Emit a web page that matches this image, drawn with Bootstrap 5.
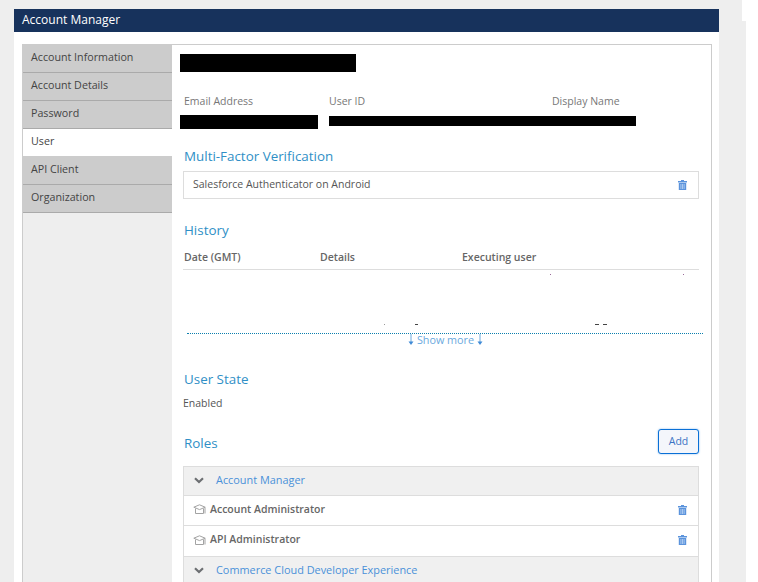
<!DOCTYPE html>
<html lang="en">
<head>
<meta charset="utf-8">
<title>Account Manager</title>
<link href="https://cdn.jsdelivr.net/npm/bootstrap@5.3.0/dist/css/bootstrap.min.css" rel="stylesheet">
<style>
html,body{height:582px;overflow:hidden}
body{font-family:"Open Sans","Liberation Sans",sans-serif;font-size:10.5px;color:#54585c;
background:linear-gradient(#fff,#fff) 742px 0/16px 21px no-repeat,linear-gradient(#eee,#eee) 0 0/746px 100% no-repeat,#fff}
.shell{width:705px;margin:9px 0 0 14px}
.topbar{height:23px;background:#17325c;color:#fff;font-size:12px;line-height:22px;padding-left:8px}
.sheet{background:#fff;padding:12px 7px 0 8px;height:600px}
.frame{border:1px solid #ccc;height:600px}
.sidetabs{width:149px;background:#eee;flex:none}
.sidetab{height:28px;line-height:25px;padding-left:8px;background:#ccc;border-bottom:1px solid #aaa;color:#444;font-size:10.7px}
.sidetab.on{background:#fff;border-bottom-color:#ccc}
.main{padding:9px 12px 0 11px;flex:1 1 auto;min-width:0;background:#fff}
.blk{background:#000}
.blk-title{width:176px;height:18px;margin-left:-3px}
.lbls{margin-top:22px;margin-left:1px;height:14px;line-height:14px;color:#777}
.vals{margin-top:7px;height:14px;margin-left:-3px}
.v1{width:138px;height:14px}
.v2{width:307px;height:10px;margin:1px 0 0 11px}
.sec{color:#2f8fc6;font-size:13.4px;line-height:18px;font-weight:400;margin-left:1px}
.gap-mfa{margin-top:18px}
.gap-hist{margin-top:22px}
.gap-state{margin-top:23px}
.mfa{height:28px;border:1px solid #ddd;line-height:25px;padding:0 11px 1px 9px;margin-top:6px;color:#555}
.col-a{width:145px}.col-b{width:223px}
.hist-h{height:20px;line-height:14px;padding-left:1px;margin-top:11px;border-bottom:1px solid #ddd;font-weight:600;color:#666}
.hist-h span{display:inline-block}
.h1w{width:136px}.h2w{width:142px}
.hist-b{height:64px;border-bottom:1px dotted #0b7fae;width:516px;margin-left:4px;background-repeat:no-repeat;
background-image:linear-gradient(#9a6a9a,#9a6a9a),linear-gradient(#9a6a9a,#9a6a9a),linear-gradient(#999,#999),linear-gradient(#444,#444),linear-gradient(#444,#444),linear-gradient(#444,#444);
background-size:1px 1px,1px 1px,1px 1px,3px 1px,4px 1px,4px 1px;
background-position:363px 4px,496px 4px,197px 54px,228px 54px,408px 54px,416px 54px}
.more{color:#6aa9de;line-height:14px;height:15px;margin-top:-2px;margin-left:9px;font-size:10.8px;gap:3px}
.plain{margin-top:8px;line-height:14px;color:#555}
.roles-top{margin-top:19px}
.roles-h{margin-top:3px}
.roles{border:1px solid #ddd;border-bottom:0;margin-top:12px}
.grp{height:29px;background:#f0f0f0;border-bottom:1px solid #ddd;padding:0 0 2px 10px;color:#4a90d9;font-size:10.9px}
.item{height:30px;border-bottom:1px solid #ddd;padding:0 11px 2px 9px;color:#666;font-weight:600}
.item.tall{height:31px}
.addb{width:41px;height:25px;padding:0;font-size:10.5px;background:#f4f6fb;border:1.5px solid #0a70d6;color:#3b73c4;border-radius:3px;box-shadow:0 0 2px #7db4ea}
.ic{flex:none;display:block}
</style>
</head>
<body>
<div class="shell">
  <div class="topbar">Account Manager</div>
  <div class="sheet">
    <div class="frame d-flex">
      <div class="sidetabs">
        <div class="sidetab">Account Information</div>
        <div class="sidetab">Account Details</div>
        <div class="sidetab">Password</div>
        <div class="sidetab on">User</div>
        <div class="sidetab">API Client</div>
        <div class="sidetab">Organization</div>
      </div>
      <div class="main">
        <div class="blk blk-title"></div>
        <div class="lbls d-flex"><span class="col-a">Email Address</span><span class="col-b">User ID</span><span>Display Name</span></div>
        <div class="vals d-flex"><div class="blk v1"></div><div class="blk v2"></div></div>
        <div class="sec gap-mfa">Multi-Factor Verification</div>
        <div class="mfa d-flex justify-content-between align-items-center"><span>Salesforce Authenticator on Android</span>
          <svg class="ic" width="9" height="10" viewBox="0 0 9 10"><path fill="#5b93dc" d="M3 0h3v1h3v1.400H0V1h3zM.8 3h7.400v7H.8z"/><path fill="#a9c8ef" d="M2.400 4h1v5h-1zM4 4h1v5H4zM5.600 4h1v5h-1z"/></svg>
        </div>
        <div class="sec gap-hist">History</div>
        <div class="hist-h"><span class="h1w">Date (GMT)</span><span class="h2w">Details</span><span>Executing user</span></div>
        <div class="hist-b"></div>
        <div class="more d-flex justify-content-center align-items-center">
          <svg class="ic" width="6" height="11" viewBox="0 0 6 11"><path fill="none" stroke="#6aa9de" d="M3 0v9"/><path fill="#3f8ad6" d="M.5 7.500h5L3 11z"/></svg>
          <span>Show more</span>
          <svg class="ic" width="6" height="11" viewBox="0 0 6 11"><path fill="none" stroke="#6aa9de" d="M3 0v9"/><path fill="#3f8ad6" d="M.5 7.500h5L3 11z"/></svg>
        </div>
        <div class="sec gap-state">User State</div>
        <div class="plain">Enabled</div>
        <div class="d-flex justify-content-between align-items-center roles-top">
          <div class="sec roles-h">Roles</div>
          <button type="button" class="btn addb">Add</button>
        </div>
        <div class="roles">
          <div class="grp d-flex align-items-center gap-2">
            <svg class="ic" width="10" height="7" viewBox="0 0 10 7"><path fill="none" stroke="#6c6f72" stroke-width="2.200" d="M1 1.200l4 3.800 4-3.800"/></svg><span class="ms-1">Account Manager</span></div>
          <div class="item d-flex justify-content-between align-items-center"><span class="d-flex align-items-center gap-1">
            <svg class="ic" width="13" height="11" viewBox="0 0 13 11"><path fill="none" stroke="#a3a3a3" d="M.8 3.200L6.500.8l5.700 2.400-5.700 2.400zM2.500 4.500v5h8v-5M12 3.500V9.500"/></svg>Account Administrator</span>
            <svg class="ic" width="9" height="10" viewBox="0 0 9 10"><path fill="#5b93dc" d="M3 0h3v1h3v1.400H0V1h3zM.8 3h7.400v7H.8z"/><path fill="#a9c8ef" d="M2.400 4h1v5h-1zM4 4h1v5H4zM5.600 4h1v5h-1z"/></svg></div>
          <div class="item tall d-flex justify-content-between align-items-center"><span class="d-flex align-items-center gap-1">
            <svg class="ic" width="13" height="11" viewBox="0 0 13 11"><path fill="none" stroke="#a3a3a3" d="M.8 3.200L6.500.8l5.700 2.400-5.700 2.400zM2.500 4.500v5h8v-5M12 3.500V9.500"/></svg>API Administrator</span>
            <svg class="ic" width="9" height="10" viewBox="0 0 9 10"><path fill="#5b93dc" d="M3 0h3v1h3v1.400H0V1h3zM.8 3h7.400v7H.8z"/><path fill="#a9c8ef" d="M2.400 4h1v5h-1zM4 4h1v5H4zM5.600 4h1v5h-1z"/></svg></div>
          <div class="grp d-flex align-items-center gap-2">
            <svg class="ic" width="10" height="7" viewBox="0 0 10 7"><path fill="none" stroke="#6c6f72" stroke-width="2.200" d="M1 1.200l4 3.800 4-3.800"/></svg><span class="ms-1">Commerce Cloud Developer Experience</span></div>
        </div>
      </div>
    </div>
  </div>
</div>
</body>
</html>
